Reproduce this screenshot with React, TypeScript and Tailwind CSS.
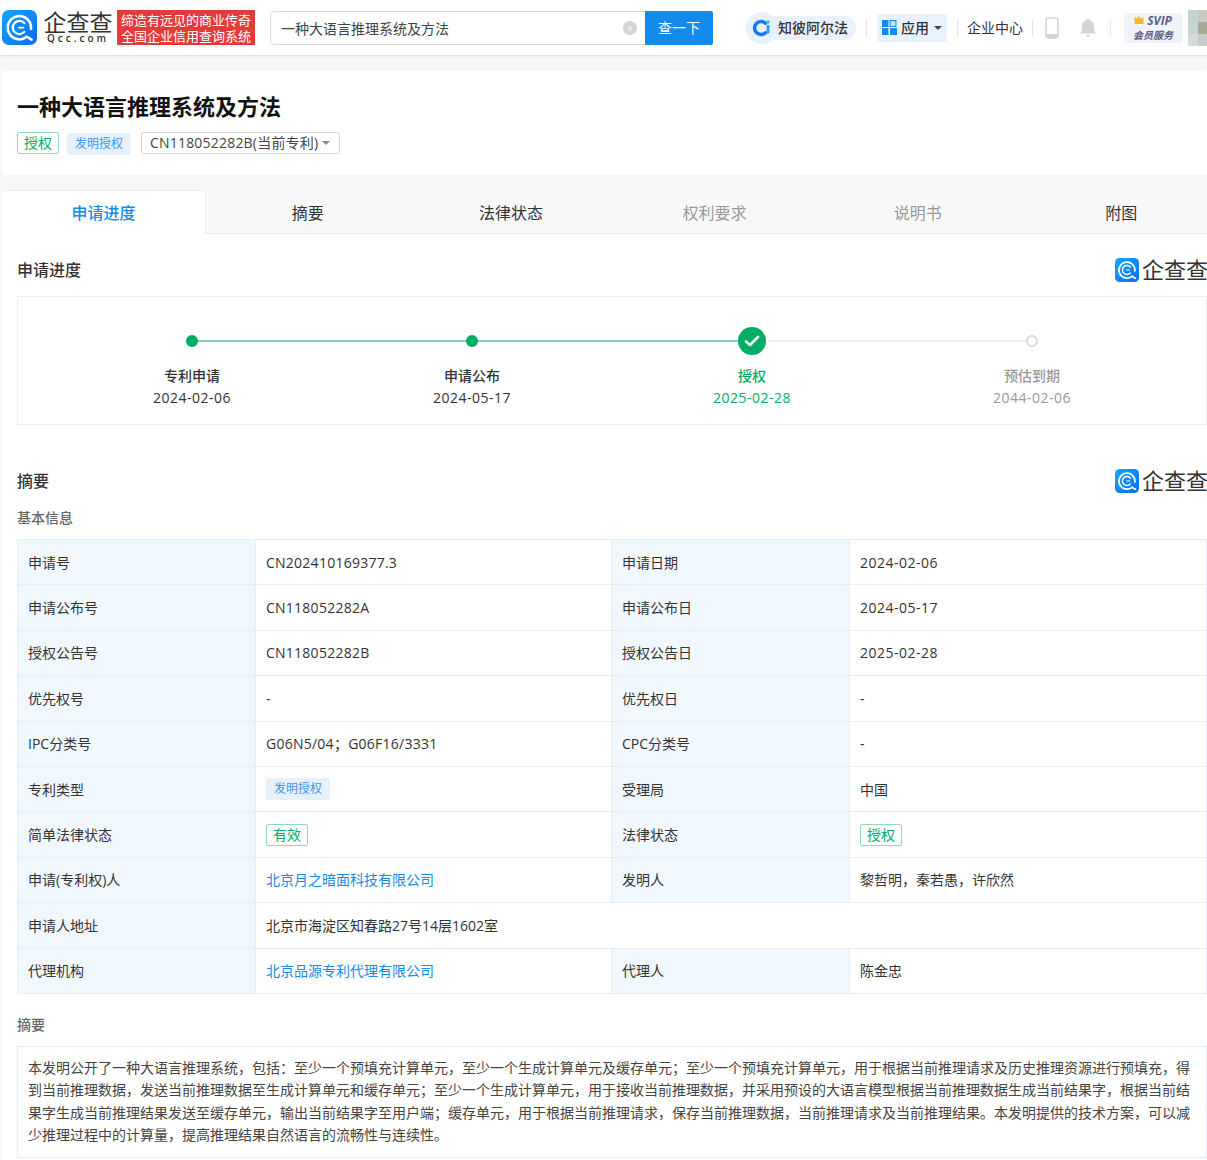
import React from "react";

const Logo = ({ size }: { size: number }) => (
  <svg width={size} height={size} viewBox="0 0 36 36" className="shrink-0">
    <defs>
      <linearGradient id="lg" x1="0" y1="0" x2="1" y2="1">
        <stop offset="0" stopColor="#16a6fb" />
        <stop offset="1" stopColor="#0a6cf0" />
      </linearGradient>
    </defs>
    <rect width="36" height="36" rx="7" fill="url(#lg)" />
    <path d="M25.500 27.500A12 12 0 1 1 29.800 19.500" fill="none" stroke="#fff" strokeWidth="2.600" strokeLinecap="round" />
    <path d="M23 22.500A6.800 6.800 0 1 1 23 13.500" fill="none" stroke="#fff" strokeWidth="2.200" strokeLinecap="round" />
    <path d="M17.500 18h4.500" stroke="#fff" strokeWidth="1.800" strokeLinecap="round" />
    <path d="M25.500 27.500l5 3" stroke="#fff" strokeWidth="2.600" strokeLinecap="round" />
  </svg>
);

const SectionLogo = () => (
  <div className="flex items-center gap-[3px]">
    <Logo size={24} />
    <span className="text-[22px] leading-[24px] text-[#333] font-normal mt-[-2px] w-[65px] whitespace-nowrap">企查查</span>
  </div>
);

const GreenTag = ({ t }: { t: string }) => (
  <span className="inline-flex items-center justify-center h-[22px] w-[42px] border border-[#8fd9b8] rounded-[2px] text-[14px] text-[#00ad65]">{t}</span>
);
const BlueTag = () => (
  <span className="inline-flex items-center justify-center h-[22px] w-[64px] bg-[#e6f1fc] rounded-[2px] text-[12px] text-[#3f95f0]">发明授权</span>
);

const Step = ({ name, date, tone }: { name: string; date: string; tone: string }) => (
  <div className="flex flex-col items-center w-[280px]">
    <div className={`text-[14px] leading-[20px] font-medium ${tone === "g" ? "text-[#00ad65]" : tone === "m" ? "text-[#999]" : "text-[#333]"}`}>{name}</div>
    <div className={`text-[14px] leading-[22px] mt-[1px] tracking-[0.5px] ${tone === "g" ? "text-[#00ad65]" : tone === "m" ? "text-[#999]" : "text-[#333]"}`}>{date}</div>
  </div>
);

const L = ({ children }: { children: React.ReactNode }) => (
  <div className="flex items-center pl-[10px] bg-[#f1f8fd] border-b border-r border-[#e6eef5] text-[14px] text-[#333]">{children}</div>
);
const V = ({ children, wide }: { children: React.ReactNode; wide?: boolean }) => (
  <div className={`flex items-center pl-[10px] border-b border-r border-[#e6eef5] text-[14px] text-[#333] ${wide ? "col-span-3" : ""}`}>{children}</div>
);
const Sn = ({ children }: { children: React.ReactNode }) => <span className="tracking-[0.25px]">{children}</span>;
const Dt = ({ children }: { children: React.ReactNode }) => <span className="tracking-[0.5px]">{children}</span>;
const A = ({ children }: { children: React.ReactNode }) => <span className="text-[14px] text-[#128bed]">{children}</span>;

const tabs = ["摘要", "法律状态", "权利要求", "说明书", "附图"];

export default function App() {
  return (
    <div
      className="w-[1207px] h-[1160px] overflow-hidden bg-[#f6f6f6] text-[#333]"
      style={{ fontFamily: '"Open Sans","Noto Sans CJK SC",sans-serif' }}
    >
      {/* header */}
      <header className="h-[56px] bg-white border-b border-[#e4e4e4] flex items-center shadow-[0_1px_3px_rgba(0,0,0,0.05)]">
        <div className="ml-[2px] flex items-center shrink-0">
          <Logo size={35} />
          <div className="ml-[5px] w-[72px] flex flex-col items-center">
            <span className="text-[23px] leading-[22px] font-normal text-[#333] whitespace-nowrap">企查查</span>
            <span className="text-[10px] leading-[11px] text-[#333] tracking-[3px] font-semibold whitespace-nowrap">Qcc.com</span>
          </div>
          <div className="ml-[3px] w-[138px] h-[35px] bg-[#e33a3a] text-white text-[13px] leading-[16px] flex flex-col items-center justify-center whitespace-nowrap">
            <span>缔造有远见的商业传奇</span>
            <span>全国企业信用查询系统</span>
          </div>
        </div>
        <div className="ml-[15px] w-[443px] h-[34px] flex shrink-0">
          <div className="flex-1 border border-[#dcdcdc] border-r-0 rounded-l-[4px] flex items-center pl-[10px] pr-[8px] text-[14px] text-[#444]">
            <span className="flex-1 pt-[1px]">一种大语言推理系统及方法</span>
            <span className="w-[14px] h-[14px] rounded-full bg-[#d4d4d4] text-white text-[9px] leading-[14px] text-center">x</span>
          </div>
          <div className="w-[68px] bg-[#128bed] rounded-r-[2px] text-white text-[14px] flex items-center justify-center">查一下</div>
        </div>
        <div className="ml-[33px] w-[110px] h-[24px] shrink-0 rounded-full bg-[#e8f2fe] flex items-center">
          <span className="w-[32px] h-[32px] rounded-full bg-[#e8f2fe] flex items-center justify-center shrink-0">
            <svg width="20" height="20" viewBox="0 0 20 20">
              <path d="M13.500 5.300A6.500 6.500 0 1 0 13.500 14.700" fill="none" stroke="#1677f0" strokeWidth="3.400" strokeLinecap="round" />
              <circle cx="16" cy="4" r="1.700" fill="#35c3f5" />
              <rect x="14.600" y="7" width="2.800" height="8.500" rx="1.200" fill="#1f9bf2" />
            </svg>
          </span>
          <span className="text-[14px] font-medium text-[#333] whitespace-nowrap">知彼阿尔法</span>
        </div>
        <div className="ml-[10px] w-px h-[18px] bg-[#e6e6e6] shrink-0" />
        <div className="ml-[10px] w-[70px] h-[28px] shrink-0 bg-[#e8f2fe] rounded-[3px] flex items-center pl-[5px]">
          <svg width="15" height="15" viewBox="0 0 14 14" className="shrink-0">
            <rect x="0" y="0" width="6" height="6.500" fill="#128bed" />
            <rect x="7.500" y="0.500" width="5.500" height="5.500" fill="#cfe6fb" stroke="#128bed" strokeWidth="1" />
            <rect x="0" y="7.500" width="6" height="6.500" fill="#128bed" />
            <rect x="7.500" y="7.500" width="6.500" height="6.500" fill="#128bed" />
          </svg>
          <span className="ml-[4px] text-[14px] font-medium text-[#333] whitespace-nowrap">应用</span>
          <span className="ml-[5px] w-0 h-0 border-x-[4px] border-x-transparent border-t-[4px] border-t-[#444]" />
        </div>
        <div className="ml-[10px] w-px h-[18px] bg-[#e6e6e6] shrink-0" />
        <span className="ml-[9px] text-[14px] text-[#333] whitespace-nowrap shrink-0">企业中心</span>
        <div className="ml-[9px] w-px h-[18px] bg-[#e6e6e6] shrink-0" />
        <svg className="ml-[12px] shrink-0" width="14" height="22" viewBox="0 0 14 22">
          <rect x="1" y="1" width="12" height="20" rx="2" fill="none" stroke="#d4d4d4" strokeWidth="1.600" />
          <rect x="1" y="17" width="12" height="4" rx="1.500" fill="#d4d4d4" />
        </svg>
        <svg className="ml-[20px] shrink-0" width="18" height="21" viewBox="0 0 18 20">
          <path d="M9 1c.9 0 1.400.6 1.500 1.400C13.300 3.200 15 5.600 15 8.500V13l2 3H1l2-3V8.500C3 5.600 4.700 3.200 7.500 2.400 7.600 1.600 8.100 1 9 1z" fill="#d4d4d4" />
          <path d="M7 17.200h4a2 2 0 0 1-4 0z" fill="#d4d4d4" />
        </svg>
        <div className="ml-[13px] w-px h-[18px] bg-[#e6e6e6] shrink-0" />
        <div className="ml-[13px] w-[58px] h-[30px] shrink-0 bg-[#f2f2fb] rounded-[2px] flex flex-col items-center justify-center">
          <div className="flex items-center gap-[3px] h-[14px]">
            <svg width="10" height="9" viewBox="0 0 10 10"><path d="M0 1l2.500 2L5 0l2.500 3L10 1v8H0z" fill="#f5b921" /></svg>
            <span className="text-[12px] leading-[14px] font-bold italic text-[#5d6087]">SVIP</span>
          </div>
          <span className="text-[10px] leading-[14px] font-bold italic text-[#5d6087] whitespace-nowrap">会员服务</span>
        </div>
        <div className="ml-[6px] w-[19px] h-[36px] grid grid-cols-2 grid-rows-3 overflow-hidden shrink-0">
          <div className="bg-[#c3d3cf]" /><div className="bg-[#c9c9bd]" />
          <div className="bg-[#c6d3ce]" /><div className="bg-[#a8a896]" />
          <div className="bg-[#d5dad7]" /><div className="bg-[#c4cdc9]" />
        </div>
      </header>

      {/* title card */}
      <section className="mt-[15px] ml-[2px] h-[104px] bg-white pl-[15px] pt-[20px] rounded-t-[2px]">
        <h1 className="text-[22px] leading-[30px] font-bold text-[#111]">一种大语言推理系统及方法</h1>
        <div className="mt-[9px] flex items-center">
          <GreenTag t="授权" />
          <span className="ml-[8px]"><BlueTag /></span>
          <span className="ml-[10px] h-[22px] w-[199px] border border-[#d8d8d8] rounded-[2px] flex items-center pl-[8px] text-[14px] text-[#444] whitespace-nowrap tracking-[0.2px]">
            CN118052282B(当前专利)
            <span className="ml-[4px] w-0 h-0 border-x-[4px] border-x-transparent border-t-[4px] border-t-[#888]" />
          </span>
        </div>
      </section>

      {/* tabs */}
      <nav className="mt-[15px] ml-[2px] h-[44px] flex overflow-hidden">
        <div className="w-[204px] shrink-0 h-[44px] bg-white border-t border-r border-[#eee] rounded-tl-[3px] flex items-center justify-center text-[16px] font-medium text-[#128bed]">申请进度</div>
        <div className="flex-1 flex border-b border-[#e9e9e9] bg-[#f8f8f8] h-[44px]">
          {tabs.map((t, i) => (
            <div key={t} className={`w-[203.400px] shrink-0 flex items-center justify-center text-[16px] pt-[2px] ${i === 2 || i === 3 ? "text-[#999]" : "text-[#333]"}`}>{t}</div>
          ))}
        </div>
      </nav>

      {/* content */}
      <main className="ml-[2px] bg-white pl-[15px] h-[926px]">
        <div className="h-[62px] flex items-center justify-between">
          <h2 className="text-[16px] font-medium text-[#333] mt-[10px]">申请进度</h2>
          <div className="mt-[10px]"><SectionLogo /></div>
        </div>

        <div className="h-[129px] border border-[#eee] relative flex flex-col w-[1190px]">
          <div className="h-[44px] relative">
            <div className="absolute left-[174px] w-[840px] top-[43px] h-[2px] bg-[#f0f0f0]" />
            <div className="absolute left-[174px] w-[560px] top-[43px] h-[2px] bg-[#7fd4ae]" />
            <div className="absolute left-[168px] top-[38px] w-[12px] h-[12px] rounded-full bg-[#00ad65]" />
            <div className="absolute left-[448px] top-[38px] w-[12px] h-[12px] rounded-full bg-[#00ad65]" />
            <div className="absolute left-[720px] top-[30px] w-[28px] h-[28px] rounded-full bg-[#00ad65] flex items-center justify-center">
              <svg width="16" height="12" viewBox="0 0 16 12"><path d="M2 6.500l4 3.500 8-8" fill="none" stroke="#fff" strokeWidth="2.600" strokeLinecap="round" strokeLinejoin="round" /></svg>
            </div>
            <div className="absolute left-[1008px] top-[38px] w-[12px] h-[12px] rounded-full bg-white border-2 border-[#d9d9d9]" />
          </div>
          <div className="flex mt-[25px] ml-[34px]">
            <Step name="专利申请" date="2024-02-06" tone="" />
            <Step name="申请公布" date="2024-05-17" tone="" />
            <Step name="授权" date="2025-02-28" tone="g" />
            <Step name="预估到期" date="2044-02-06" tone="m" />
          </div>
        </div>

        <div className="mt-[42px] h-[27px] flex items-center justify-between">
          <h2 className="text-[16px] font-medium text-[#333]">摘要</h2>
          <SectionLogo />
        </div>
        <div className="mt-[14px] text-[14px] leading-[20px] text-[#666] font-medium">基本信息</div>
        <div className="mt-[11px] grid grid-cols-[238px_356px_238px_357px] auto-rows-[45.400px] border-t border-l border-[#e6eef5] w-[1190px]">
          <L>申请号</L><V><Sn>CN202410169377.3</Sn></V><L>申请日期</L><V><Dt>2024-02-06</Dt></V>
          <L>申请公布号</L><V><Sn>CN118052282A</Sn></V><L>申请公布日</L><V><Dt>2024-05-17</Dt></V>
          <L>授权公告号</L><V><Sn>CN118052282B</Sn></V><L>授权公告日</L><V><Dt>2025-02-28</Dt></V>
          <L>优先权号</L><V>-</V><L>优先权日</L><V>-</V>
          <L>IPC分类号</L><V><Sn>G06N5/04；G06F16/3331</Sn></V><L>CPC分类号</L><V>-</V>
          <L>专利类型</L><V><BlueTag /></V><L>受理局</L><V>中国</V>
          <L>简单法律状态</L><V><GreenTag t="有效" /></V><L>法律状态</L><V><GreenTag t="授权" /></V>
          <L>申请(专利权)人</L><V><A>北京月之暗面科技有限公司</A></V><L>发明人</L><V>黎哲明，秦若愚，许欣然</V>
          <L>申请人地址</L><V wide>北京市海淀区知春路27号14层1602室</V>
          <L>代理机构</L><V><A>北京品源专利代理有限公司</A></V><L>代理人</L><V>陈金忠</V>
        </div>
        <div className="mt-[21px] text-[14px] leading-[20px] text-[#666] font-medium">摘要</div>
        <div className="mt-[11px] h-[112px] w-[1190px] border border-[#e6eef5] pl-[10px] pr-[16px] pt-[10px] text-[14px] leading-[22.500px] text-[#444] text-justify">
          本发明公开了一种大语言推理系统，包括：至少一个预填充计算单元，至少一个生成计算单元及缓存单元；至少一个预填充计算单元，用于根据当前推理请求及历史推理资源进行预填充，得到当前推理数据，发送当前推理数据至生成计算单元和缓存单元；至少一个生成计算单元，用于接收当前推理数据，并采用预设的大语言模型根据当前推理数据生成当前结果字，根据当前结果字生成当前推理结果发送至缓存单元，输出当前结果字至用户端；缓存单元，用于根据当前推理请求，保存当前推理数据，当前推理请求及当前推理结果。本发明提供的技术方案，可以减少推理过程中的计算量，提高推理结果自然语言的流畅性与连续性。
        </div>
      </main>
    </div>
  );
}
